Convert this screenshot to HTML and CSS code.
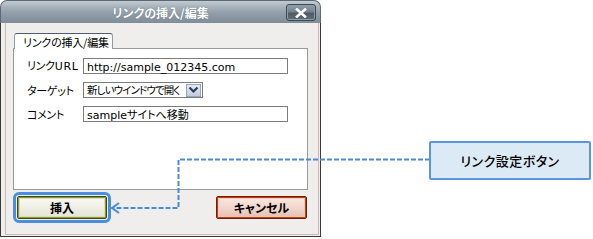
FILE: index.html
```html
<!DOCTYPE html>
<html lang="ja">
<head>
<meta charset="utf-8">
<title>リンクの挿入/編集</title>
<link rel="stylesheet" href="styles.css">
</head>
<body>
<div class="stage">
  <div class="window">
    <div class="titlebar">
      <span></span>
      <span class="title">リンクの挿入/編集</span>
      <span class="close-wrap"><span class="close"><svg width="12" height="10" viewBox="0 0 12 10"><path d="M2 1.5 L10 8.5 M10 1.5 L2 8.5" stroke="#fff" stroke-width="2.6" stroke-linecap="square"/></svg></span></span>
    </div>
    <div class="body">
      <div class="frame">
        <div class="tabs"><div class="tab">リンクの挿入/編集</div></div>
        <div class="panel">
          <div class="form">
            <span class="label">リンク<span class="lat">URL</span></span>
            <span class="field wide"><span class="lat">http://sample_012345.com</span></span>
            <span class="label">ターゲット</span>
            <span class="select"><span class="sel-text">新しいウインドウで開く</span><span class="sel-btn"><svg width="11" height="8" viewBox="0 0 11 8"><path d="M1.5 1.5 L5.5 5.5 L9.5 1.5" fill="none" stroke="#2b3a5a" stroke-width="2.2"/></svg></span></span>
            <span class="label">コメント</span>
            <span class="field wide"><span class="lat">sample</span>サイトへ移動</span>
          </div>
        </div>
        <div class="buttons">
          <span class="btn insert">挿入</span>
          <span class="btn cancel">キャンセル</span>
        </div>
      </div>
    </div>
  </div>
  <svg class="connector" width="593" height="239" viewBox="0 0 593 239">
    <path d="M430 159.5 H178.5 V208 H113" fill="none" stroke="#4a8ad8" stroke-width="2" stroke-dasharray="5 2"/>
    <path d="M119 203 L112 208 L119 213" fill="none" stroke="#4a8ad8" stroke-width="2"/>
  </svg>
  <div class="callout">リンク設定ボタン</div>
</div>
</body>
</html>
```
FILE: styles.css
```css
html, body {
  margin: 0;
  padding: 0;
  background: #ffffff;
}
body {
  font-family: "Noto Sans CJK JP", "DejaVu Sans", sans-serif;
  font-size: 12px;
  color: #000;
  font-feature-settings: "palt";
}
.stage {
  position: relative;
  width: 593px;
  height: 239px;
  overflow: hidden;
}
.window {
  width: 321px;
  height: 237px;
  display: flex;
  flex-direction: column;
}
.titlebar {
  height: 23px;
  flex: none;
  display: grid;
  grid-template-columns: 1fr auto 1fr;
  align-items: center;
  border-radius: 7px 7px 0 0;
  border: 1px solid #5c6872;
  border-bottom: none;
  box-sizing: border-box;
  background: linear-gradient(#c2cbd2 0%, #a3afb9 30%, #8f9ca7 60%, #7f8d98 100%);
}
.title {
  color: #fff;
  font-weight: bold;
  font-size: 12px;
  line-height: 23px;
  white-space: nowrap;
  text-shadow: 0 0 1px #55606a;
}
.close-wrap {
  display: flex;
  justify-content: flex-end;
  padding-right: 4px;
}
.close {
  width: 28px;
  height: 15px;
  border: 1px solid #3e4a55;
  border-radius: 3px;
  background: linear-gradient(#93a0ab 0%, #74828e 45%, #4f5c68 55%, #5f6d79 100%);
  box-shadow: inset 0 0 0 1px #8e9aa5;
  display: flex;
  align-items: center;
  justify-content: center;
}
.body {
  flex: 1;
  display: flex;
  border: 1px solid #3a3a3a;
  border-top: none;
  padding: 0 1px 1px 4px;
  background: #efeeec;
}
.frame {
  flex: 1;
  border: 1px solid #cdb9b4;
  border-top: none;
  padding: 10px 10px 0 7px;
  display: flex;
  flex-direction: column;
}
.tabs {
  display: flex;
  padding-left: 1px;
  position: relative;
  z-index: 1;
  margin-bottom: -1px;
}
.tab {
  height: 16px;
  width: 99px;
  padding-left: 8px;
  box-sizing: border-box;
  background: #fff;
  border: 1px solid #8e9aa6;
  border-top-color: #4e5c70;
  border-bottom: none;
  border-radius: 3px 3px 0 0;
  font-size: 11px;
  line-height: 16px;
  white-space: nowrap;
  letter-spacing: -0.2px;
}
.panel {
  height: 142px;
  box-sizing: border-box;
  background: #fff;
  border: 1px solid #9a9a9a;
  padding: 9px 0 0 13px;
}
.form {
  display: grid;
  grid-template-columns: 56px auto;
  grid-auto-rows: 16px;
  row-gap: 8px;
  align-items: center;
  justify-items: start;
}
.label {
  font-size: 11px;
  letter-spacing: -0.3px;
  line-height: 16px;
  white-space: nowrap;
}
.lat {
  font-family: "DejaVu Sans", sans-serif;
  font-size: 11px;
  letter-spacing: 0;
}
.label .lat {
  letter-spacing: 0.6px;
}
.field {
  height: 16px;
  box-sizing: border-box;
  border: 1px solid #7c7c7c;
  padding-left: 3px;
  line-height: 14px;
  font-size: 11px;
  white-space: nowrap;
  background: #fff;
}
.wide {
  width: 205px;
}
.select {
  display: flex;
  align-items: center;
  height: 16px;
  box-sizing: border-box;
  border: 1px solid #7c7c7c;
  width: 120px;
  background: #fff;
}
.sel-text {
  flex: 1;
  padding-left: 3px;
  font-size: 10.5px;
  letter-spacing: -0.9px;
  line-height: 14px;
  white-space: nowrap;
}
.sel-btn {
  width: 15px;
  height: 13px;
  margin-right: 1px;
  box-sizing: border-box;
  border: 1px solid #9aa4b8;
  background: linear-gradient(#e4e9f2, #c3cbdc);
  display: flex;
  align-items: center;
  justify-content: center;
}
.buttons {
  display: flex;
  justify-content: space-between;
  margin: 6px 1px 0 4px;
}
.btn {
  height: 23px;
  box-sizing: border-box;
  display: flex;
  align-items: center;
  justify-content: center;
  font-weight: bold;
  font-size: 12px;
  border-radius: 2px;
}
.insert {
  width: 90px;
  border: 1px solid #3f4a0e;
  box-shadow: inset 0 0 0 1px #8c9a2a, inset 0 0 0 2px #d8dcc0;
  background: linear-gradient(#fbfbf6, #ecece2 60%, #e2e2d6);
  outline: 3px solid #4a8ee0;
  outline-offset: 1px;
}
.cancel {
  width: 91px;
  border: 1px solid #6a1c06;
  box-shadow: inset 0 0 0 1px #c8400e, inset 0 0 0 2px #f0c8bc;
  background: linear-gradient(#fbeae4, #f0d2c8 60%, #e6bcb0);
}
.connector {
  position: absolute;
  left: 0;
  top: 0;
  pointer-events: none;
}
.callout {
  position: absolute;
  left: 429px;
  top: 141px;
  width: 162px;
  height: 39px;
  box-sizing: border-box;
  border: 2px solid #5a96e0;
  border-radius: 2px;
  background: #dceaf5;
  display: flex;
  align-items: center;
  justify-content: center;
  font-size: 13px;
  font-weight: 500;
  letter-spacing: 0.5px;
}
```
